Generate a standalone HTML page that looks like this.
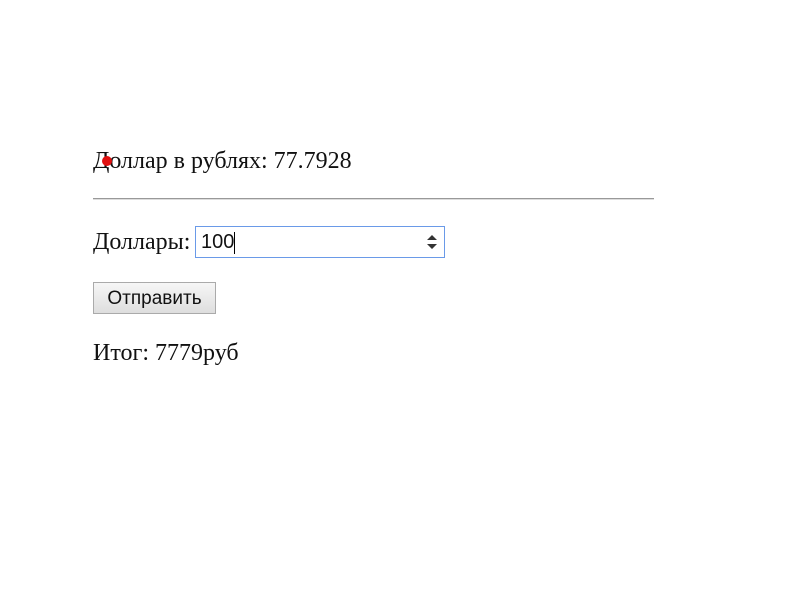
<!DOCTYPE html>
<html><head><meta charset="utf-8"><style>
body{margin:0;background:#fff;font-family:"Liberation Serif",serif;font-size:24px;color:#111}
.a{position:absolute;white-space:nowrap}
</style></head><body>
<div class="a" style="left:93px;top:148px">Доллар в рублях: 77.7928</div>
<div class="a" style="left:102px;top:156px;width:10px;height:10px;border-radius:50%;background:#e01010"></div>
<div class="a" style="left:93px;top:198px;width:561px;height:1px;background:#999;border-bottom:1px solid #ddd"></div>
<div class="a" style="left:93px;top:229px">Доллары:</div>
<div class="a" style="left:195px;top:226px;width:248px;height:30px;border:1px solid #6a9ae8;box-sizing:content-box;font-family:'Liberation Sans',sans-serif;font-size:20px">
<span style="position:absolute;left:5px;top:4px">100</span>
<span style="position:absolute;left:38px;top:5px;width:1px;height:22px;background:#000"></span>
<svg style="position:absolute;right:6px;top:7px" width="12" height="16"><path d="M1 6 L6 1 L11 6Z M1 10 L6 15 L11 10Z" fill="#333"/></svg>
</div>
<div class="a" style="left:93px;top:282px;width:121px;height:30px;border:1px solid #aaa;background:linear-gradient(#f6f6f6,#dedede);font-family:'Liberation Sans',sans-serif;font-size:19px;text-align:center;line-height:31px">Отправить</div>
<div class="a" style="left:93px;top:340px">Итог: 7779руб</div>
</body></html>
